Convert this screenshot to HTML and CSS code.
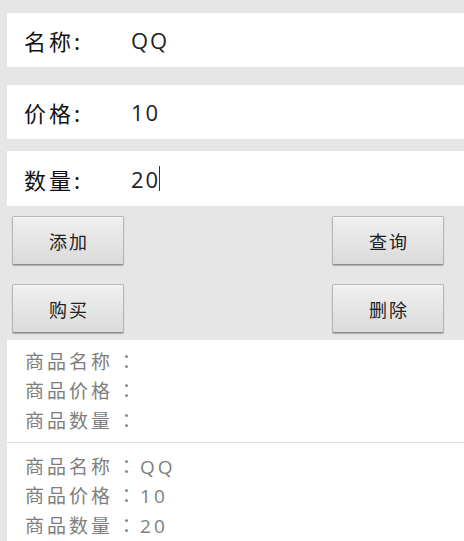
FILE: index.html
```html
<!DOCTYPE html>
<html>
<head>
<meta charset="utf-8">
<link rel="stylesheet" href="styles.css">
</head>
<body>
<div class="page">
  <div class="field f1"><span class="label">名称:</span><span class="value">QQ</span></div>
  <div class="field f2"><span class="label">价格:</span><span class="value">10</span></div>
  <div class="field f3"><span class="label">数量:</span><span class="value">20<span class="caret"></span></span></div>
  <div class="btnrow r1">
    <button class="btn">添加</button>
    <button class="btn">查询</button>
  </div>
  <div class="btnrow r2">
    <button class="btn">购买</button>
    <button class="btn">删除</button>
  </div>
  <div class="results">
    <div class="block">
      <div class="line">商品名称<span class="colon">：</span></div>
      <div class="line">商品价格<span class="colon">：</span></div>
      <div class="line">商品数量<span class="colon">：</span></div>
    </div>
    <div class="block second">
      <div class="line">商品名称<span class="colon">：</span>QQ</div>
      <div class="line">商品价格<span class="colon">：</span>10</div>
      <div class="line">商品数量<span class="colon">：</span>20</div>
    </div>
  </div>
</div>
</body>
</html>
```
FILE: styles.css
```css
html, body {
  margin: 0;
  padding: 0;
  background: #e6e6e6;
  height: 541px;
  overflow: hidden;
}
.page {
  padding-left: 7px;
  padding-top: 13px;
  font-family: "Open Sans", "Noto Sans CJK SC", sans-serif;
}
.field {
  background: #ffffff;
  height: 54px;
  display: flex;
  align-items: center;
  padding-left: 17px;
}
.f2 { margin-top: 18px; }
.f3 { margin-top: 12px; height: 55px; }
.label {
  width: 107px;
  font-family: "Noto Sans CJK SC", sans-serif;
  font-size: 22px;
  letter-spacing: 3px;
  color: #111;
}
.value {
  font-size: 22px;
  letter-spacing: 2px;
  color: #222;
  display: flex;
  align-items: center;
}
.caret {
  display: inline-block;
  width: 1px;
  height: 25px;
  background: #333;
  margin-left: -1px;
}
.btnrow {
  display: flex;
  justify-content: space-between;
  padding-left: 5px;
  padding-right: 20px;
}
.r1 { margin-top: 10px; }
.r2 { margin-top: 19px; }
.btn {
  width: 112px;
  height: 49px;
  border: 1px solid #b4b4b4;
  border-bottom-color: #8e8e8e;
  border-radius: 2px;
  background: linear-gradient(#f0f0f0, #dadada);
  box-shadow: 0 1px 1px rgba(0,0,0,0.25), inset 0 1px 0 #fafafa;
  font-family: "Noto Sans CJK SC", sans-serif;
  font-size: 18px;
  letter-spacing: 2px;
  color: #222;
  padding: 0 0 0 2px;
}
.results {
  margin-top: 7px;
  background: #ffffff;
  height: 210px;
}
.block {
  padding: 7px 0 0 18px;
  height: 95px;
}
.second {
  border-top: 1px solid #e0e0e0;
  padding-top: 9px;
  height: 100px;
}
.line {
  font-family: "Open Sans", "Noto Sans CJK SC", sans-serif;
  font-size: 19px;
  letter-spacing: 3px;
  line-height: 28.3px;
  color: #7e7e7e;
}
.colon {
  font-family: "Noto Sans CJK TC", sans-serif;
  margin-left: 4px;
  letter-spacing: 4px;
}
```
